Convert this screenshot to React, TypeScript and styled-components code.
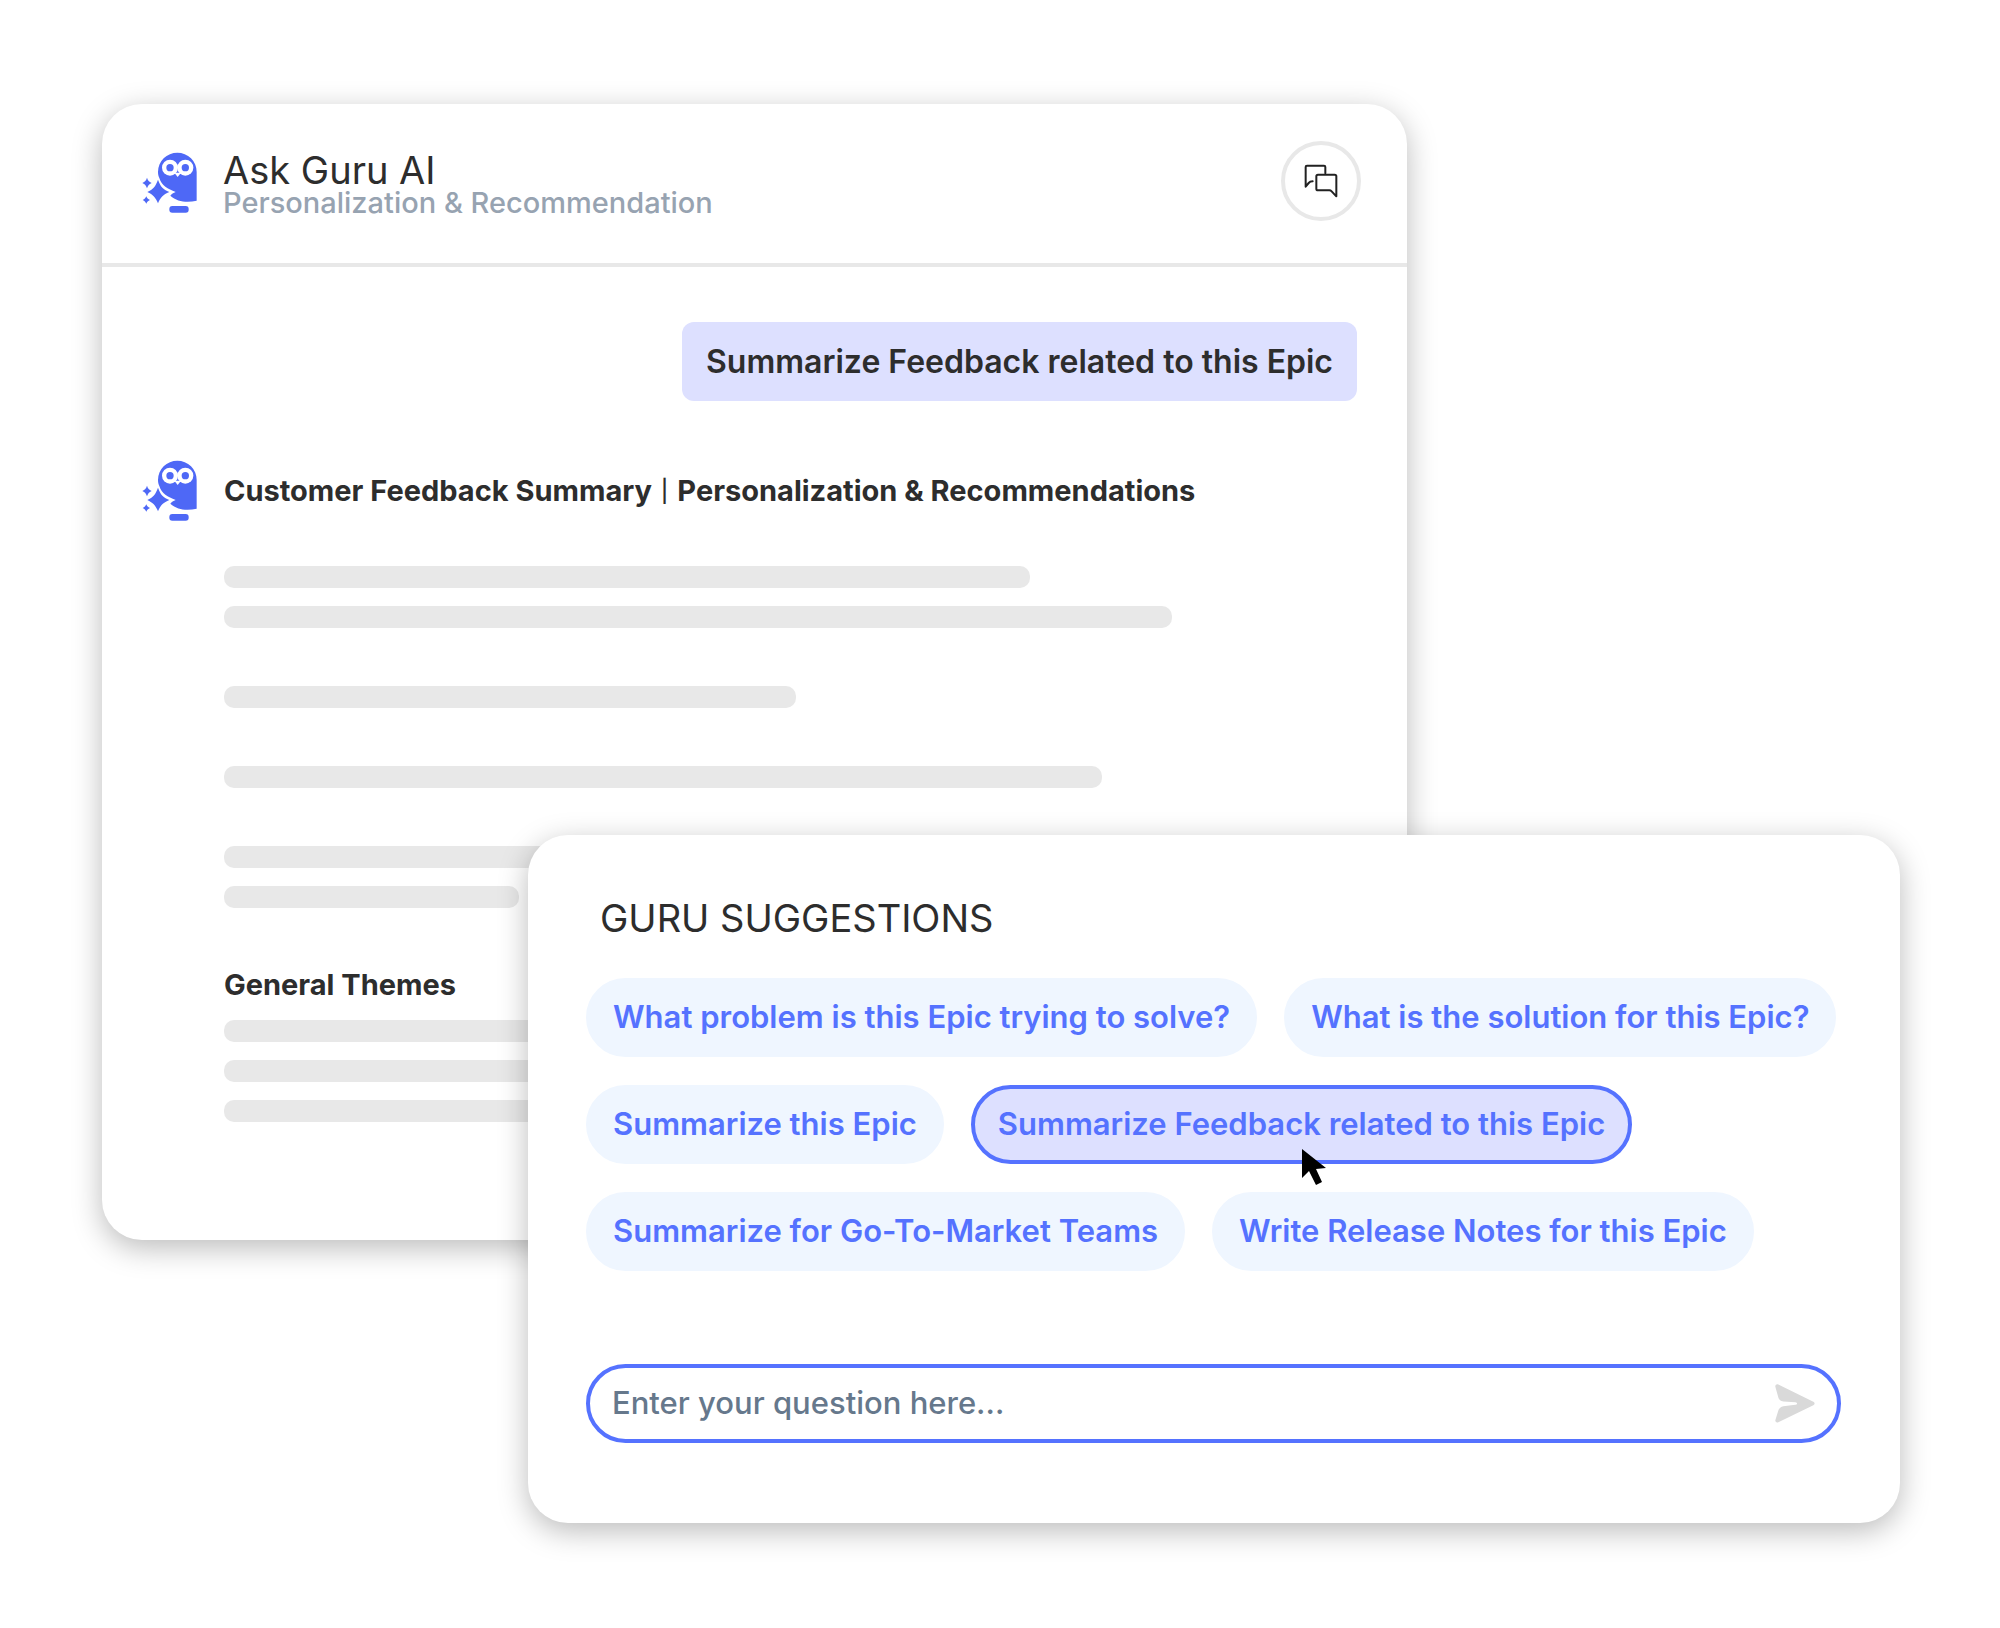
import React from "react";
import styled, { createGlobalStyle, css } from "styled-components";

const GlobalStyle = createGlobalStyle`
  *, *::before, *::after { box-sizing: border-box; }
  body {
    margin: 0;
    background: #ffffff;
    color: #2d2d2d;
    font-family: Inter, "Open Sans", "Liberation Sans", sans-serif;
  }
  h1, h2, h3, p { margin: 0; }
  button, input { font: inherit; }
`;

const Stage = styled.main`
  display: grid;
  grid-template-columns: 426fr 879fr 493fr;
  align-items: start;
  padding: 104px 100px 104px 102px;
`;

const card = css`
  grid-row: 1;
  min-width: 0;
  background: #ffffff;
  border-radius: 40px;
  box-shadow: 0 8px 30px rgba(0, 0, 0, 0.27);
`;

const ChatCard = styled.section`
  ${card}
  grid-column: 1 / 3;
  padding-bottom: 118px;
`;

const SuggestionCard = styled.section`
  ${card}
  grid-column: 2 / 4;
  margin-top: 731px;
  padding: 59px 59px 80px 58px;
`;

const ChatHeader = styled.header`
  display: flex;
  align-items: flex-start;
  height: 163px;
  padding: 37px 46px 0 40px;
  border-bottom: 4px solid #e8e8e8;
`;

const OwlSvg = styled.svg`
  flex: none;
  width: 55px;
  height: 61px;
`;

const HeaderOwl = styled.div`
  padding-top: 11px;
  line-height: 0;
`;

const Titles = styled.div`
  flex: 1;
  margin-left: 26px;
  padding-top: 10px;
`;

const Title = styled.h1`
  font-size: 38px;
  font-weight: 400;
  line-height: 38px;
`;

const Subtitle = styled.p`
  color: #97a3b1;
  font-size: 29px;
  font-weight: 500;
  line-height: 28px;
`;

const RoundButton = styled.button`
  display: flex;
  align-items: center;
  justify-content: center;
  width: 80px;
  height: 80px;
  padding: 0;
  background: #ffffff;
  border: 4px solid #e8e8e8;
  border-radius: 50%;
`;

const Conversation = styled.div`
  display: flex;
  flex-direction: column;
  padding: 55px 50px 0 40px;
`;

const UserMessage = styled.p`
  align-self: flex-end;
  padding: 20px 24px;
  background: #dde0ff;
  border-radius: 12px;
  font-size: 32px;
  font-weight: 600;
  line-height: 39px;
`;

const Answer = styled.article`
  display: grid;
  grid-template-columns: 55px 1fr;
  column-gap: 27px;
  align-items: center;
  margin-top: 59px;
`;

const AnswerBody = styled.div`
  grid-column: 2;
  padding-top: 45px;
`;

const Heading = styled.h2`
  font-size: 29px;
  font-weight: 700;
  line-height: 38px;
`;

const Divider = styled.span`
  margin: 0 2px;
  font-size: 22px;
  font-weight: 500;
  line-height: 22px;
  vertical-align: 2px;
`;

const Lines = styled.div`
  display: flex;
  flex-direction: column;
  gap: 18px;
  margin-bottom: 58px;

  &:last-child { margin-bottom: 0; }
`;

const Line = styled.div<{ $width: number }>`
  width: ${(p) => p.$width}%;
  height: 22px;
  background: #e8e8e8;
  border-radius: 10px;
`;

const SectionHeading = styled(Heading)`
  margin-bottom: 16px;
`;

const SuggestionTitle = styled.h2`
  padding-left: 14px;
  font-size: 38px;
  font-weight: 400;
  line-height: 48px;
`;

const ChipRows = styled.div`
  display: flex;
  flex-direction: column;
  gap: 28px;
  margin-top: 36px;
`;

const ChipRow = styled.div`
  display: flex;
  gap: 27px;
`;

const Chip = styled.button<{ $active?: boolean }>`
  position: relative;
  height: 79px;
  padding: 0 23px 2px;
  background: ${(p) => (p.$active ? "#dde0ff" : "#eff6ff")};
  border: 4px solid ${(p) => (p.$active ? "#5572ff" : "#eff6ff")};
  border-radius: 40px;
  color: #5572ff;
  font-size: 31px;
  font-weight: 600;
  white-space: nowrap;
`;

const Pointer = styled.svg`
  position: absolute;
  top: 60px;
  left: 50%;
  width: 24px;
  height: 36px;
  overflow: visible;
`;

const AskForm = styled.form`
  display: flex;
  align-items: center;
  height: 79px;
  margin-top: 93px;
  padding: 0 22px;
  border: 4px solid #5572ff;
  border-radius: 40px;
`;

const AskInput = styled.input`
  flex: 1;
  min-width: 0;
  padding: 0 0 2px;
  background: transparent;
  border: 0;
  outline: 0;
  color: #2d2d2d;
  font-size: 31px;
  font-weight: 500;
  line-height: 40px;

  &::placeholder { color: #66788c; opacity: 1; }
`;

const SendButton = styled.button`
  display: flex;
  padding: 0;
  background: none;
  border: 0;
`;

function Owl() {
  return (
    <OwlSvg viewBox="37 36 165 183" fill="#4e68f6" aria-hidden="true">
      <path d="M85 96a58 58 0 0 1 116 0v86c-28 7-58 4-79-15 4-5 9-8 16-11-24-9-42-19-49-42-3-6-4-12-4-18z" />
      <g fill="#fff">
        <circle cx="121" cy="83" r="24" />
        <circle cx="167" cy="83" r="24" />
        <path d="M134 98h20l-10 13z" />
      </g>
      <circle cx="121" cy="83" r="11" />
      <circle cx="167" cy="83" r="11" />
      <path d="M85 119c7 20 15 29 34 37-19 8-27 17-34 34-7-17-15-26-32-34 17-8 25-17 32-37z" />
      <path d="M52 113c3 9 6 12 14 16-8 4-11 7-14 16-3-9-6-12-14-16 8-4 11-7 14-16z" />
      <path d="M50 169c2 6 5 9 11 11-6 3-9 5-11 11-3-6-5-8-11-11 6-2 8-5 11-11z" />
      <rect x="119" y="198" width="58" height="20" rx="9" />
    </OwlSvg>
  );
}

function ChatIcon() {
  return (
    <svg width="34" height="34" viewBox="132 131 102 102" fill="none" stroke="#212121" strokeWidth="6" strokeLinecap="round" strokeLinejoin="round" aria-hidden="true">
      <path d="M196 159v-19q0-4-4-4h-51q-4 0-4 4v59l9-11q4-5 12-5" />
      <path d="M174 163h50q5 0 5 5v60l-14-15q-3-3-7-3h-34q-5 0-5-5v-37q0-5 5-5z" />
    </svg>
  );
}

function SendIcon() {
  return (
    <svg width="40" height="39" viewBox="167 131 120 116" fill="#d9d9d9" aria-hidden="true">
      <path d="M168 139c-1-5 4-9 9-7l105 52c5 2 5 8 0 10l-105 51c-5 3-10-1-9-6l9-29c2-7 8-12 15-13l36-4c7-1 7-7 0-8l-36-2c-8-1-13-5-15-12z" />
    </svg>
  );
}

const intro = [[71.1, 83.7], [50.5], [77.5], [60, 26]];
const themes = [62, 70, 56];

const suggestions = [
  ["What problem is this Epic trying to solve?", "What is the solution for this Epic?"],
  ["Summarize this Epic", "Summarize Feedback related to this Epic"],
  ["Summarize for Go-To-Market Teams", "Write Release Notes for this Epic"],
];
const chosen = "Summarize Feedback related to this Epic";

export default function App() {
  return (
    <>
      <GlobalStyle />
      <Stage>
        <ChatCard>
          <ChatHeader>
            <HeaderOwl><Owl /></HeaderOwl>
            <Titles>
              <Title>Ask Guru AI</Title>
              <Subtitle>Personalization &amp; Recommendation</Subtitle>
            </Titles>
            <RoundButton type="button" aria-label="Conversations"><ChatIcon /></RoundButton>
          </ChatHeader>
          <Conversation>
            <UserMessage>{chosen}</UserMessage>
            <Answer>
              <Owl />
              <Heading>Customer Feedback Summary <Divider>|</Divider> Personalization &amp; Recommendations</Heading>
              <AnswerBody>
                {intro.map((group, i) => (
                  <Lines key={i}>
                    {group.map((w) => <Line key={w} $width={w} />)}
                  </Lines>
                ))}
                <SectionHeading as="h3">General Themes</SectionHeading>
                <Lines>
                  {themes.map((w) => <Line key={w} $width={w} />)}
                </Lines>
              </AnswerBody>
            </Answer>
          </Conversation>
        </ChatCard>
        <SuggestionCard>
          <SuggestionTitle>GURU SUGGESTIONS</SuggestionTitle>
          <ChipRows>
            {suggestions.map((row) => (
              <ChipRow key={row[0]}>
                {row.map((text) => (
                  <Chip key={text} type="button" $active={text === chosen}>
                    {text}
                    {text === chosen && (
                      <Pointer viewBox="0 0 24 36" aria-hidden="true">
                        <path d="M0 0v29l7-7 7 14 6-3-6-13 10-1z" />
                      </Pointer>
                    )}
                  </Chip>
                ))}
              </ChipRow>
            ))}
          </ChipRows>
          <AskForm onSubmit={(e: React.FormEvent) => e.preventDefault()}>
            <AskInput type="text" aria-label="Your question" placeholder="Enter your question here..." />
            <SendButton type="submit" aria-label="Send"><SendIcon /></SendButton>
          </AskForm>
        </SuggestionCard>
      </Stage>
    </>
  );
}
